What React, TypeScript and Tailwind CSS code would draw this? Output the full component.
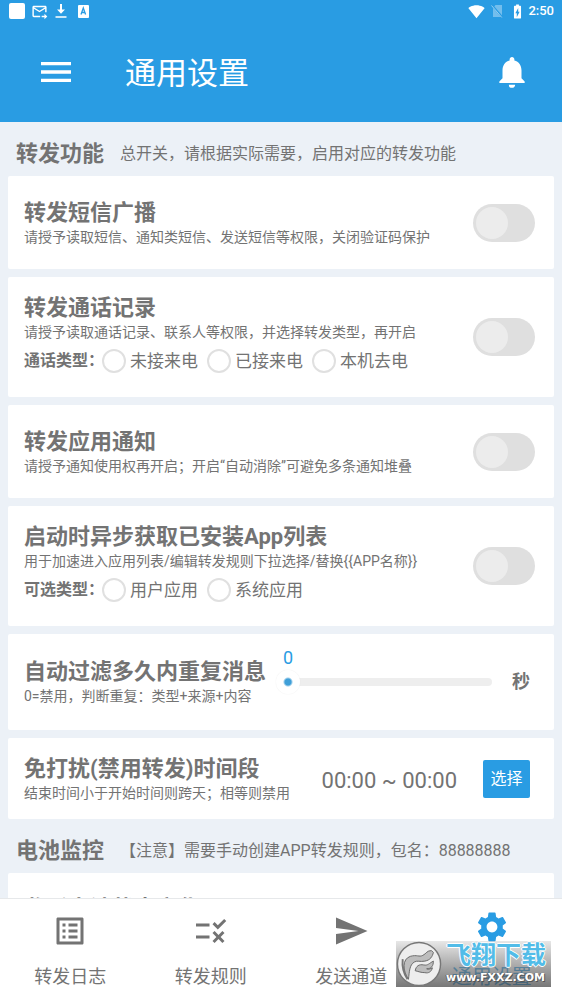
import type { ReactNode } from "react";
import {
  MdBatteryChargingFull,
  MdForwardToInbox,
  MdListAlt,
  MdMenu,
  MdNotifications,
  MdRule,
  MdSend,
  MdSettings,
  MdSignalWifi4Bar,
} from "react-icons/md";

function StatusBar() {
  return (
    <div className="flex h-[22px] items-center pr-2 pl-[9px]">
      <span className="size-4 rounded-xs bg-white" />
      <MdForwardToInbox className="ml-1.5 size-[17px]" />
      <svg viewBox="0 0 12 16" className="ml-[7px] h-4 w-3" fill="currentColor" aria-hidden="true">
        <path d="M5 1h2v5.500h3L6 10.800 2 6.500h3zM0.500 13.200h11v1.600h-11z" />
      </svg>
      <svg viewBox="0 0 11 13" className="ml-[11px] h-[13px] w-[11px]" aria-hidden="true">
        <rect x="0" y="0" width="11" height="13" rx="1" fill="#fff" />
        <path d="M3 9.500 5.300 3 7.600 9.500M3.800 7.500h3" fill="none" stroke="#299ce3" strokeWidth="1.300" />
      </svg>
      <MdSignalWifi4Bar className="ml-auto size-[17px]" />
      <svg viewBox="0 0 12 14" className="ml-1.5 h-3.5 w-3" aria-hidden="true">
        <path d="M4.500 1H11v12H2V4z" fill="#fff" opacity=".35" />
        <path d="M.7 1 11.500 13.500" stroke="#299ce3" strokeWidth="2" />
        <path d="M.5 1.500 10.800 13.500" stroke="#fff" strokeWidth="1" opacity=".5" />
      </svg>
      <MdBatteryChargingFull className="ml-1.5 size-[17px]" />
      <span className="ml-0.5 text-[13px] leading-5 font-medium">2:50</span>
    </div>
  );
}

function SectionHeading({ title, note }: { title: string; note: string }) {
  return (
    <div className="flex h-[54px] shrink-0 items-center gap-4 px-4 pt-2.5 whitespace-nowrap">
      <h2 className="text-[22px] leading-7 font-bold">{title}</h2>
      <p className="text-base leading-5">{note}</p>
    </div>
  );
}

function Title({ title, note }: { title: string; note?: string }) {
  return (
    <div className="whitespace-nowrap">
      <h3 className="text-[22px] leading-7 font-bold">{title}</h3>
      {note && <p className="text-sm leading-5">{note}</p>}
    </div>
  );
}

function SwitchCard({
  title,
  note,
  group,
  options,
}: {
  title: string;
  note?: string;
  group?: string;
  options?: string[];
}) {
  return (
    <section className="mx-2 flex shrink-0 items-center justify-between rounded-xs bg-white pr-[19px] pl-4">
      <div className={options ? "pt-[17px] pb-6" : "pt-[23px] pb-[22px]"}>
        <Title title={title} note={note} />
        {options && (
          <div role="radiogroup" aria-label={group} className="mt-[7px] flex h-6 items-center whitespace-nowrap">
            <span className="w-[78px] text-base leading-6 font-bold">{group}：</span>
            <div className="flex gap-[9px]">
              {options.map((o) => (
                <label key={o} className="flex items-center gap-1 text-[17px] leading-6">
                  <input
                    type="radio"
                    name={group}
                    className="size-6 appearance-none rounded-full border-2 border-[#e0e0e0] bg-white checked:border-[#299ce3]"
                  />
                  {o}
                </label>
              ))}
            </div>
          </div>
        )}
      </div>
      <input
        type="checkbox"
        role="switch"
        aria-label={title}
        className="h-[38px] w-[62px] shrink-0 appearance-none rounded-full bg-[#dfdfdf] p-[3px] before:block before:size-8 before:rounded-full before:bg-[#ececec] checked:bg-[#299ce3]"
      />
    </section>
  );
}

function NavItem({ icon, label, active }: { icon: ReactNode; label: string; active?: boolean }) {
  return (
    <button
      type="button"
      className={`flex flex-1 flex-col items-center ${
        active ? "pt-2.5 text-xl leading-6 text-[#299ce3]" : "pt-3.5 text-lg leading-6"
      }`}
    >
      {icon}
      <span className={active ? "mt-5" : "mt-4"}>{label}</span>
    </button>
  );
}

function Watermark() {
  return (
    <div className="pointer-events-none absolute right-[11px] bottom-3 flex h-[46px] w-[155px] items-center bg-linear-to-b from-[#d0d0d0]/50 to-[#4a4a4a]/75">
      <svg viewBox="0 0 48 48" className="size-[46px] shrink-0" aria-hidden="true">
        <circle cx="24" cy="24" r="22.500" fill="#eeeeee" stroke="#777" strokeWidth="1.500" />
        <path
          d="M13 40C7 31 6 19 15 16c7-2 9 1 13-1 4-2 4-5 9-5l2 2c-1 4-3 8-9 9-5 1-8-1-11 1-5 3-5 10-6 18z"
          fill="#bdbdbd"
          stroke="#666"
          strokeWidth="1"
        />
        <path
          d="M20 31c1-5 4-7 9-6 4 1 6-2 10-4 0 5-2 8-7 8 2 1 4 0 6-1-1 4-4 6-8 5-4 0-6-1-10-2z"
          fill="#bdbdbd"
          stroke="#666"
          strokeWidth="1"
        />
        <path d="M7 19c-1 9 1 15 5 21" fill="none" stroke="#777" strokeWidth="2" />
      </svg>
      <div className="ml-1 flex flex-col whitespace-nowrap">
        <span className="text-[25px] leading-7 font-bold text-[#52bce8] [text-shadow:1px_0_0_#fff,-1px_0_0_#fff,0_1px_0_#fff,0_-1px_0_#fff]">
          飞翔下载
        </span>
        <span className="font-['DejaVu_Sans'] text-[11px] leading-4 font-bold text-white [text-shadow:1px_1px_0_#555,-1px_0_0_#666]">
          www.FXXZ.COM
        </span>
      </div>
    </div>
  );
}

export default function App() {
  return (
    <div className="flex h-screen flex-col overflow-hidden bg-[#ecf1f7] font-[Roboto,'Noto_Sans_CJK_SC',sans-serif] text-[#737373]">
      <header className="shrink-0 bg-[#299ce3] text-white">
        <StatusBar />
        <div className="flex h-[100px] items-center pr-[31px] pl-9">
          <button type="button" aria-label="菜单">
            <MdMenu className="size-10" />
          </button>
          <h1 className="ml-[49px] pt-1 text-[31px] leading-10">通用设置</h1>
          <button type="button" aria-label="通知" className="ml-auto">
            <MdNotifications className="size-[38px]" />
          </button>
        </div>
      </header>

      <main className="flex min-h-0 flex-1 flex-col overflow-hidden">
        <SectionHeading title="转发功能" note="总开关，请根据实际需要，启用对应的转发功能" />
        <div className="flex shrink-0 flex-col gap-2">
          <SwitchCard title="转发短信广播" note="请授予读取短信、通知类短信、发送短信等权限，关闭验证码保护" />
          <SwitchCard
            title="转发通话记录"
            note="请授予读取通话记录、联系人等权限，并选择转发类型，再开启"
            group="通话类型"
            options={["未接来电", "已接来电", "本机去电"]}
          />
          <SwitchCard title="转发应用通知" note="请授予通知使用权再开启；开启“自动消除”可避免多条通知堆叠" />
          <SwitchCard
            title="启动时异步获取已安装App列表"
            note="用于加速进入应用列表/编辑转发规则下拉选择/替换{{APP名称}}"
            group="可选类型"
            options={["用户应用", "系统应用"]}
          />
          <section className="mx-2 flex items-center rounded-xs bg-white pr-6 pl-4">
            <div className="py-6">
              <Title title="自动过滤多久内重复消息" note="0=禁用，判断重复：类型+来源+内容" />
            </div>
            <div className="ml-2.5 flex min-w-0 flex-1 flex-col self-start pt-3">
              <output htmlFor="seconds" className="w-6 text-center text-lg leading-6 text-[#299ce3]">
                0
              </output>
              <input
                id="seconds"
                type="range"
                min={0}
                max={120}
                defaultValue={0}
                aria-label="自动过滤多久内重复消息"
                className="h-6 w-full appearance-none bg-transparent [&::-webkit-slider-runnable-track]:h-2 [&::-webkit-slider-runnable-track]:rounded-full [&::-webkit-slider-runnable-track]:bg-[#eeeeee] [&::-webkit-slider-thumb]:-mt-2 [&::-webkit-slider-thumb]:size-6 [&::-webkit-slider-thumb]:appearance-none [&::-webkit-slider-thumb]:rounded-full [&::-webkit-slider-thumb]:bg-[radial-gradient(circle,#3f9fd8_3px,#ffffff_5px)] [&::-webkit-slider-thumb]:shadow-[0_0_1px_#dddddd]"
              />
            </div>
            <span className="ml-5 text-lg leading-6 font-bold">秒</span>
          </section>
          <section className="mx-2 flex items-center rounded-xs bg-white pt-[17px] pb-4 pr-6 pl-4">
            <Title title="免打扰(禁用转发)时间段" note="结束时间小于开始时间则跨天；相等则禁用" />
            <span className="ml-auto pt-1 text-[22px] leading-7 whitespace-nowrap">00:00 ~ 00:00</span>
            <button
              type="button"
              className="ml-[26px] h-[38px] w-[47px] shrink-0 rounded-xs bg-[#299ce3] text-base leading-6 whitespace-nowrap text-white"
            >
              选择
            </button>
          </section>
        </div>
        <SectionHeading title="电池监控" note="【注意】需要手动创建APP转发规则，包名：88888888" />
        <section className="mx-2 shrink-0 rounded-xs bg-white px-4 pt-[22px] pb-6">
          <Title title="监听电池状态变化" />
        </section>
      </main>

      <nav className="relative flex h-[101px] shrink-0 border-t border-[#e6e8ea] bg-white">
        <NavItem icon={<MdListAlt className="size-9" />} label="转发日志" />
        <NavItem icon={<MdRule className="size-9" />} label="转发规则" />
        <NavItem icon={<MdSend className="size-9" />} label="发送通道" />
        <NavItem icon={<MdSettings className="size-9" />} label="通用设置" active />
        <Watermark />
      </nav>
    </div>
  );
}
